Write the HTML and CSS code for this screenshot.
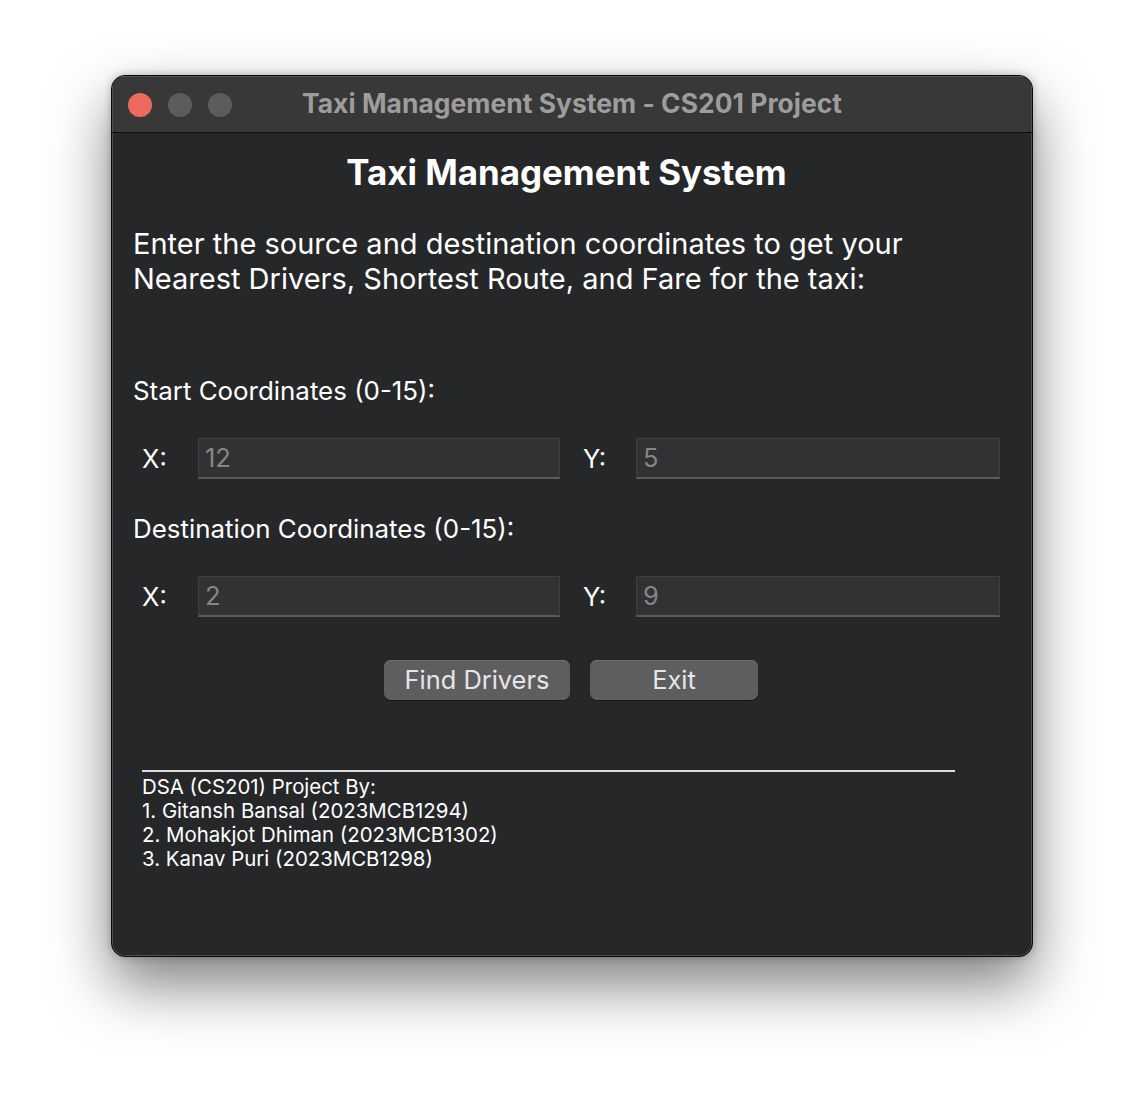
FILE: index.html
```html
<!DOCTYPE html>
<html>
<head>
<meta charset="utf-8">
<link rel="stylesheet" href="styles.css">
</head>
<body>
<div class="window">
  <div class="titlebar">
    <div class="lights">
      <span class="light red"></span>
      <span class="light grey"></span>
      <span class="light grey"></span>
    </div>
    <div class="wtitle">Taxi Management System - CS201 Project</div>
  </div>
  <div class="content">
    <h1 class="heading">Taxi Management System</h1>
    <p class="intro">Enter the source and destination coordinates to get your<br>Nearest Drivers, Shortest Route, and Fare for the taxi:</p>
    <div class="section-label first">Start Coordinates (0-15):</div>
    <div class="row">
      <span class="lbl lx">X:</span>
      <div class="field fx">12</div>
      <span class="lbl ly">Y:</span>
      <div class="field fy">5</div>
    </div>
    <div class="section-label">Destination Coordinates (0-15):</div>
    <div class="row">
      <span class="lbl lx">X:</span>
      <div class="field fx">2</div>
      <span class="lbl ly">Y:</span>
      <div class="field fy">9</div>
    </div>
    <div class="buttons">
      <button class="btn find">Find Drivers</button>
      <button class="btn exit">Exit</button>
    </div>
    <div class="rule"></div>
    <div class="credits">
      <div>DSA (CS201) Project By:</div>
      <div>1. Gitansh Bansal (2023MCB1294)</div>
      <div>2. Mohakjot Dhiman (2023MCB1302)</div>
      <div>3. Kanav Puri (2023MCB1298)</div>
    </div>
  </div>
</div>
</body>
</html>
```
FILE: styles.css
```css
* { box-sizing: border-box; }
html, body { margin: 0; padding: 0; }
body {
  background: #ffffff;
  width: 1144px;
  height: 1104px;
  overflow: hidden;
  font-family: "Inter", "Noto Sans", sans-serif;
}
.window {
  margin: 75px 0 0 111px;
  width: 922px;
  height: 882px;
  border-radius: 14px;
  background: #262729;
  border: 1px solid #0a0a0a;
  box-shadow: inset 0 0 0 1px #505050, 0 28px 60px rgba(0,0,0,0.5), 0 0 8px rgba(0,0,0,0.25);
  overflow: hidden;
  display: flex;
  flex-direction: column;
}
.titlebar {
  height: 57px;
  flex: none;
  background: #383838;
  border-bottom: 1px solid #111;
  display: flex;
  align-items: center;
  position: relative;
  box-shadow: inset 0 1px 0 #555, inset 1px 0 0 #505050, inset -1px 0 0 #505050;
}
.lights {
  display: flex;
  gap: 16px;
  padding-left: 16px;
  position: absolute;
  left: 0;
  top: 17px;
}
.light {
  width: 24px;
  height: 24px;
  border-radius: 50%;
  display: block;
}
.red { background: #ee6a5e; }
.grey { background: #5c5c5e; }
.wtitle {
  width: 100%;
  text-align: center;
  color: #9d9d9d;
  font-weight: 700;
  font-size: 26.4px;
  letter-spacing: 0.05px;
  line-height: 30px;
  margin-top: -2px;
}
.content {
  padding: 19px 32px 0 21px;
  color: #ffffff;
}
.heading {
  margin: 0;
  text-align: center;
  font-size: 34.9px;
  line-height: 40px;
  font-weight: 700;
}
.intro {
  margin: 34px 0 0 0;
  font-size: 29px;
  line-height: 35px;
  font-weight: 400;
}
.section-label {
  margin-top: 35px;
  font-size: 25.9px;
  line-height: 30px;
}
.section-label.first { margin-top: 80px; }
.row {
  display: flex;
  align-items: center;
  margin-top: 32px;
  padding-left: 9px;
  height: 41px;
}
.lbl {
  font-size: 25.5px;
  color: #ffffff;
}
.lx { width: 56px; }
.ly { width: 53px; margin-left: 23px; }
.field {
  height: 41px;
  background: #313234;
  border: 1px solid #3e3f41;
  border-bottom: 2px solid #5a5b5d;
  color: #868686;
  font-size: 25.5px;
  line-height: 38px;
  padding-left: 6px;
}
.fx { width: 362px; }
.fy { width: 364px; }
.buttons {
  display: flex;
  justify-content: center;
  gap: 20px;
  margin-top: 43px;
  margin-right: -30px;
  margin-left: -21px;
}
.btn {
  height: 40px;
  border: none;
  border-radius: 7px;
  background: #5e5e60;
  color: #e6e6e6;
  font-family: "Inter", "Noto Sans", sans-serif;
  font-size: 25.4px;
  box-shadow: inset 0 1px 0 #6e6e70, 0 1px 1px rgba(0,0,0,0.4);
  padding: 0 0 2px 0;
}
.find { width: 186px; }
.exit { width: 168px; }
.rule {
  margin: 70px 0 0 9px;
  width: 813px;
  height: 2px;
  background: #dcdcdc;
}
.credits {
  margin-left: 9px;
  margin-top: 3px;
  font-size: 20.4px;
  line-height: 24px;
  color: #ffffff;
}
```
